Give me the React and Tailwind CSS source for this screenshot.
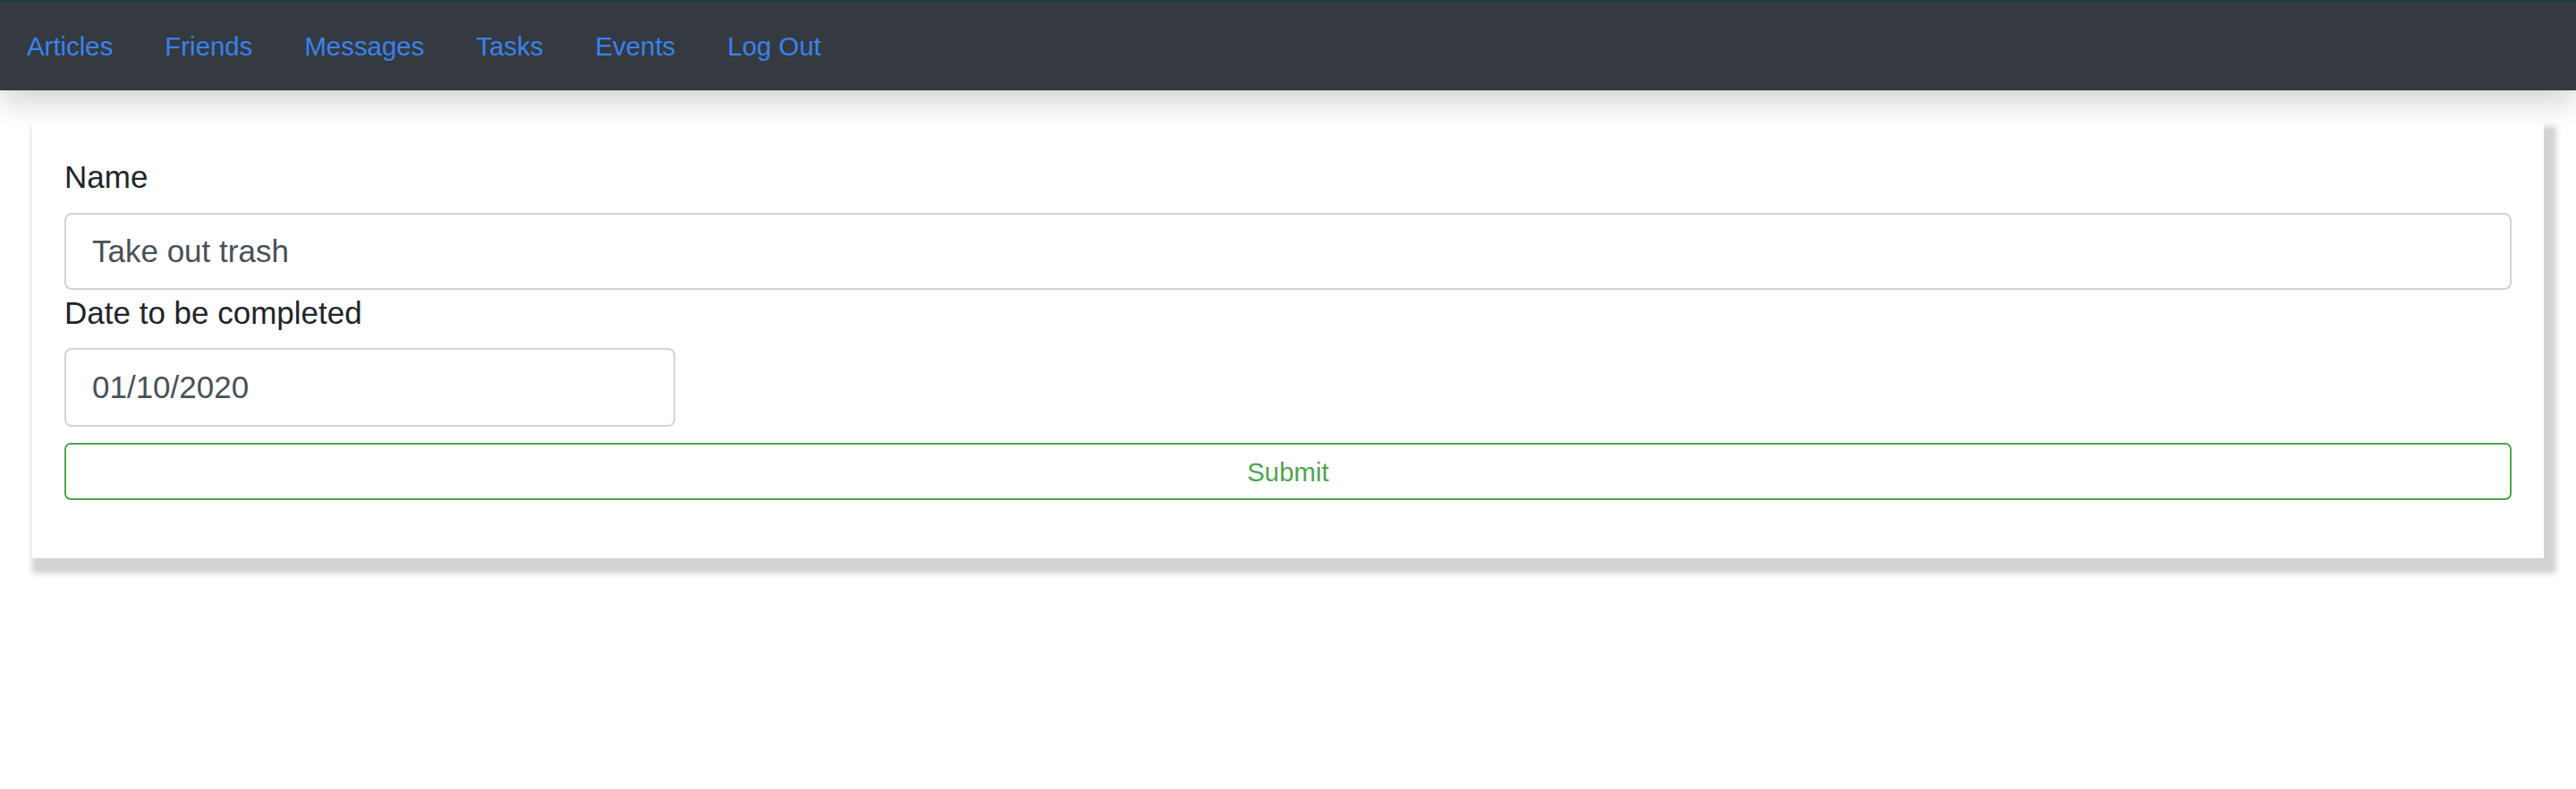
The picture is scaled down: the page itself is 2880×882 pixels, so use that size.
import React from "react";

export default function App() {
  const links = ["Articles", "Friends", "Messages", "Tasks", "Events", "Log Out"];
  return (
    <div className="min-h-[882px] w-full bg-white" style={{ fontFamily: '"Liberation Sans", Arial, sans-serif' }}>
      <nav className="relative flex h-[101px] items-center border-t-[2px] border-[#1c3a4a] bg-[#343a40] pl-[30px] shadow-[0_14px_30px_rgba(0,0,0,0.17)]">
        <div className="flex items-center gap-[58px]">
          {links.map((l) => (
            <a key={l} href="#" className="text-[29.4px] leading-[44px] text-[#3a82f0] no-underline">
              {l}
            </a>
          ))}
        </div>
      </nav>
      <div className="px-[36px] pt-[37px]">
        <div className="relative bg-white px-[36px] pb-[65px] pt-[34px] shadow-[7px_10px_6px_7px_#d3d3d3]">
          <label className="block text-[35px] leading-[52.5px] text-[#212529]">Name</label>
          <input
            type="text"
            readOnly
            defaultValue="Take out trash"
            className="mt-[13px] block h-[86px] w-full rounded-[8px] border-[2px] border-[#ced4da] bg-white px-[29px] text-[35px] text-[#495057] outline-none"
            style={{ fontFamily: '"Liberation Sans", Arial, sans-serif' }}
          />
          <label className="block text-[35px] leading-[52.5px] text-[#212529]">Date to be completed</label>
          <input
            type="text"
            readOnly
            defaultValue="01/10/2020"
            className="mt-[13px] block h-[88px] w-[683px] rounded-[8px] border-[2px] border-[#ced4da] bg-white px-[29px] text-[35px] text-[#495057] outline-none"
            style={{ fontFamily: '"Liberation Sans", Arial, sans-serif' }}
          />
          <button
            type="button"
            className="mt-[18px] flex h-[64px] w-full items-center justify-center rounded-[7px] border-[2px] border-[#51a351] bg-white pt-[2px] text-[29.4px] text-[#51a351]"
            style={{ fontFamily: '"Liberation Sans", Arial, sans-serif' }}
          >
            Submit
          </button>
        </div>
      </div>
    </div>
  );
}
